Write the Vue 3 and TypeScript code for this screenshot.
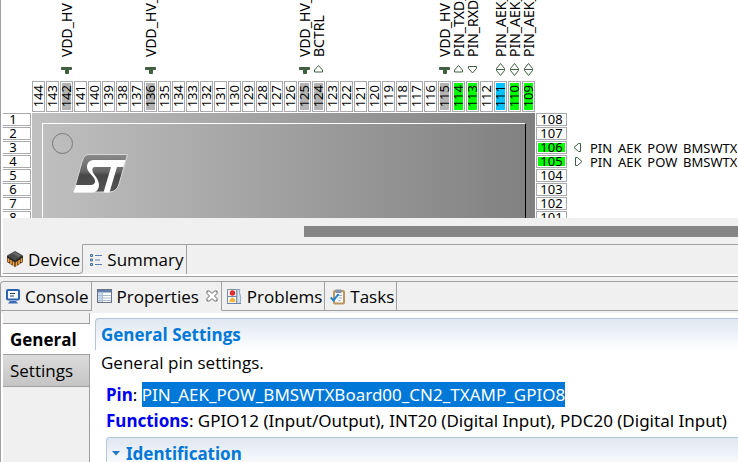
<script setup lang="ts">
import { ref } from 'vue'

type Glyph = 'supply' | 'up' | 'down' | 'both' | 'left' | 'right'
type Tone = 'plain' | 'grey' | 'green' | 'blue'

interface Pin {
  num: number
  label: string
  glyph: Glyph | ''
  tone: Tone
}

const named: Record<number, Omit<Pin, 'num'>> = {
  142: { label: 'VDD_HV', glyph: 'supply', tone: 'grey' },
  136: { label: 'VDD_HV_', glyph: 'supply', tone: 'grey' },
  125: { label: 'VDD_HV_', glyph: 'supply', tone: 'grey' },
  124: { label: 'BCTRL', glyph: 'up', tone: 'grey' },
  115: { label: 'VDD_HV', glyph: 'supply', tone: 'grey' },
  114: { label: 'PIN_TXD_', glyph: 'up', tone: 'green' },
  113: { label: 'PIN_RXD_', glyph: 'down', tone: 'green' },
  111: { label: 'PIN_AEK_', glyph: 'both', tone: 'blue' },
  110: { label: 'PIN_AEK_', glyph: 'both', tone: 'green' },
  109: { label: 'PIN_AEK_', glyph: 'both', tone: 'green' },
  106: { label: 'PIN_AEK_POW_BMSWTX', glyph: 'left', tone: 'green' },
  105: { label: 'PIN_AEK_POW_BMSWTX', glyph: 'right', tone: 'green' },
}

const glyphPaths: Record<Glyph, string> = {
  supply: 'M.5 4.5h10v2h-3v4h-3v-4h-4z',
  up: 'M5.5 2.5l4 4.500v2h-8v-2z',
  down: 'M1.500 3.500h8v2l-4 4.500-4-4.500z',
  both: 'M5.500 0.500l4 5v2l-4 5-4-5v-2zM1.500 6.500h8',
  left: 'M7.500 2.500v8h-2l-4.500-4 4.500-4z',
  right: 'M2.500 2.500v8h2l4.500-4-4.500-4z',
}

function pin(num: number): Pin {
  return { num, ...(named[num] ?? { label: '', glyph: '', tone: 'plain' }) }
}

const topPins: Pin[] = Array.from({ length: 36 }, (_, i) => pin(144 - i))
const rightPins: Pin[] = Array.from({ length: 8 }, (_, i) => pin(108 - i))
const leftPins: Pin[] = Array.from({ length: 8 }, (_, i) => pin(i + 1))

const page = ref<'General' | 'Settings'>('General')
</script>

<template>
  <div class="workbench">
    <section class="editor">
      <div class="canvas">
        <div class="top-pins">
          <div v-for="p in topPins" :key="p.num" class="column">
            <span class="v-label">{{ p.label }}</span>
            <span class="v-glyph">
              <svg v-if="p.glyph" width="11" height="13" viewBox="0 0 11 13" :class="['glyph', { solid: p.glyph === 'supply' }]">
                <path :d="glyphPaths[p.glyph]" />
              </svg>
            </span>
            <span class="v-pin"><span :class="['pad', p.tone]"><span class="v-num">{{ p.num }}</span></span></span>
          </div>
        </div>
        <div class="body-row">
          <div class="side left">
            <div v-for="p in leftPins" :key="p.num" class="h-pin"><span class="pad plain">{{ p.num }}</span></div>
          </div>
          <div class="chip">
            <div class="die">
              <svg width="90" height="80" viewBox="0 0 90 80" role="img" aria-label="ST">
                <defs>
                  <linearGradient id="badge" x1="0" y1="0" x2="0" y2="1">
                    <stop offset="0" stop-color="#8a8a8a" />
                    <stop offset="0.450" stop-color="#666" />
                    <stop offset="0.550" stop-color="#484848" />
                    <stop offset="1" stop-color="#555" />
                  </linearGradient>
                </defs>
                <circle cx="19.500" cy="19.500" r="10" fill="none" stroke="#777" />
                <path d="M46 30.500H84.500L76 60q-2 7.500-9 8H30.500L39.500 36q2-5.500 6.500-5.500z" fill="url(#badge)" stroke="#d8d8d8" />
                <path d="M82.500 36H51c-7 0-9 7-5 12l5 6c2 3 1 7-3 7H33l-2.500 7.500H50c5-.5 7-6 5.500-10.500C54 53 50 50 49.500 47c-.5-2.500.5-4 2.500-4H68l-7.500 25.500h6L74 43h6.500z" fill="#fff" />
              </svg>
            </div>
          </div>
          <div class="side right">
            <div v-for="p in rightPins" :key="p.num" class="right-row">
              <div class="h-pin"><span :class="['pad', p.tone]">{{ p.num }}</span></div>
              <svg v-if="p.glyph" width="11" height="13" viewBox="0 0 11 13" class="glyph">
                <path :d="glyphPaths[p.glyph]" />
              </svg>
              <span class="h-label">{{ p.label }}</span>
            </div>
          </div>
        </div>
      </div>
      <div class="scrollbar"><div class="thumb"></div></div>
      <div class="bottom-tabs" role="tablist">
        <button class="tab current" role="tab" aria-selected="true">
          <svg width="18" height="18" viewBox="0 0 18 18">
            <path d="M1 6v6l8 5 8-5V6z" fill="#5a3a20" />
            <path d="M2.500 8v4M5 9.500v4.500M7.500 11v5M10.500 11v5M13 9.500v4.500M15.500 8v4" stroke="#eda548" stroke-width="1.600" />
            <path d="M9 1l8 4.500-8 5-8-5z" fill="#4b4b4b" />
            <path d="M1 5.500l8 5 8-5v2l-8 5-8-5z" fill="#2b2927" />
            <path d="M9 2l6 3.500-3 1.500-6-3.500z" fill="#666" />
          </svg>
          Device
        </button>
        <button class="tab" role="tab" aria-selected="false">
          <svg width="14" height="14" viewBox="0 0 14 14">
            <path d="M1.500 1.500h2v2h-2zM1.500 6h2v2h-2zM1.500 10.500h2v2h-2z" fill="#9fc0dc" stroke="#4a74a0" />
            <path d="M6 2.500h7M6 7h5M6 11.500h7" stroke="#5c7db8" />
          </svg>
          Summary
        </button>
        <span class="rest"></span>
      </div>
    </section>

    <section class="views">
      <div class="view-tabs" role="tablist">
        <button class="tab" role="tab" aria-selected="false">
          <svg width="14" height="16" viewBox="0 0 14 16">
            <rect x="1" y="2" width="12" height="9.500" rx="1" fill="#f4f8ff" stroke="#2d62ad" stroke-width="2" />
            <path d="M4 5.500h5M4 8h4" stroke="#2f3f60" />
            <path d="M4 13h6l2 2.500H2z" fill="#3b6db4" />
          </svg>
          Console
        </button>
        <button class="tab current" role="tab" aria-selected="true">
          <svg width="15" height="15" viewBox="0 0 15 15">
            <rect x=".5" y=".5" width="14" height="13" fill="#fff" stroke="#6b7284" />
            <path d="M1 1h13v2.500H1z" fill="#5f7fae" />
            <path d="M1 4h4v9H1z" fill="#cfdff0" />
            <path d="M5.500 4v9M1 6.500h13M1 9h13M1 11.500h13" stroke="#a9bdd0" />
          </svg>
          Properties
          <svg class="close" width="12" height="12" viewBox="0 0 12 12">
            <path d="M1 1h2.500L6 3.500 8.500 1H11v2.500L8.500 6 11 8.500V11H8.500L6 8.500 3.500 11H1V8.500L3.500 6 1 3.500z" fill="#fff" stroke="#666" />
          </svg>
        </button>
        <button class="tab" role="tab" aria-selected="false">
          <svg width="15" height="17" viewBox="0 0 15 17">
            <path d="M.5 1.500h9v14h-9z" fill="#fdf4ea" stroke="#7c8eab" />
            <path d="M10 1.500h3q-1.500 2 0 5t0 9h-3z" fill="#d7e4f1" stroke="#8ea5bd" />
            <path d="M0 8.500h10M0 15.500h14" stroke="#6a83a6" />
            <circle cx="5.500" cy="5" r="2.700" fill="#e02a38" />
            <path d="M2.500 14q0-3.500 3-4.500 3 1 3 4.500z" fill="#f3b33d" />
          </svg>
          Problems
        </button>
        <button class="tab" role="tab" aria-selected="false">
          <svg width="15" height="17" viewBox="0 0 15 17">
            <rect x="4" y="3" width="10" height="12.500" rx="1" fill="#f4f8fd" stroke="#bd955e" stroke-width="2" />
            <path d="M5.500 1.500h6V5h-6z" fill="#8590ab" />
            <path d="M7.500 7.500h4.500M8.500 10h3.500M8.500 12.500h2" stroke="#96abc8" />
            <path d="M.8 9.500L3.500 12.500 8.500 6" fill="none" stroke="#1d83cf" stroke-width="2" />
          </svg>
          Tasks
        </button>
        <span class="rest"></span>
      </div>

      <div class="view-body">
        <nav class="pages">
          <button :class="['page', { on: page === 'General' }]" @click="page = 'General'">General</button>
          <button :class="['page', { on: page === 'Settings' }]" @click="page = 'Settings'">Settings</button>
        </nav>
        <div class="form">
          <h2 class="heading">General Settings</h2>
          <p class="description">General pin settings.</p>
          <div class="facts">
            <p><b>Pin</b>: <span class="selected">PIN_AEK_POW_BMSWTXBoard00_CN2_TXAMP_GPIO8</span></p>
            <p><b>Functions</b>: GPIO12 (Input/Output), INT20 (Digital Input), PDC20 (Digital Input)</p>
            <button class="heading expander" aria-expanded="true">
              <svg width="8" height="5" viewBox="0 0 8 5"><path d="M0 0h8L4 4.500z" fill="#2477c4" /></svg>
              Identification
            </button>
          </div>
        </div>
      </div>
    </section>
  </div>
</template>

<style>
html,
body {
  background: #f0f0f0;
  overflow: hidden;
}
</style>

<style scoped>
.workbench {
  display: flex;
  flex-direction: column;
  gap: 4px;
  height: 100vh;
  overflow: hidden;
  font-family: 'Open Sans', 'Noto Sans', sans-serif;
  font-size: 17px;
  color: #000;
}

button {
  font: inherit;
  color: inherit;
  margin: 0;
  padding: 0;
  border: 0;
  background: none;
  white-space: nowrap;
}

svg {
  display: block;
  flex: none;
}

p,
h2 {
  margin: 0;
}

.editor {
  flex: 0 0 277px;
  box-sizing: border-box;
  display: flex;
  flex-direction: column;
  min-width: 0;
  min-height: 0;
  padding: 0 0 2px 2px;
  border: solid #a0a0a0;
  border-width: 0 0 1px 1px;
  background: #fff;
}

.canvas {
  flex: 1;
  min-height: 0;
  overflow: hidden;
  font-family: 'Noto Sans', 'Open Sans', sans-serif;
  font-size: 13px;
}

.top-pins {
  display: flex;
  gap: 1px;
  padding-left: 29px;
}

.column {
  flex: none;
  width: 13px;
  display: grid;
  grid-template-rows: 57px 24px 31px;
  padding-bottom: 1px;
}

.v-label {
  writing-mode: vertical-rl;
  transform: rotate(180deg);
  font-size: 14px;
  line-height: 13px;
  white-space: nowrap;
}

.v-glyph {
  display: grid;
  place-items: center;
}

.glyph {
  fill: none;
  stroke: #3f5f40;
}

.glyph.solid {
  fill: #3f5f40;
}

.v-pin,
.h-pin {
  box-sizing: border-box;
  border: 1px solid #a9a9b0;
  padding: 1px;
  background: #fff;
  display: flex;
}

.pad {
  flex: 1;
  display: flex;
  align-items: center;
  justify-content: center;
  line-height: 9px;
}

.pad.grey {
  background: #b4b4b4;
}

.pad.green {
  background: #00ff00;
}

.pad.blue {
  background: #00c3ff;
}

.v-num {
  writing-mode: vertical-rl;
  transform: rotate(180deg);
  line-height: 9px;
}

.body-row {
  display: flex;
  gap: 1px;
}

.side {
  display: grid;
  grid-auto-rows: 13px;
  gap: 1px;
  flex: none;
}

.left .h-pin {
  width: 28px;
  border-left: 0;
}

.left .pad {
  padding-right: 7px;
}

.chip {
  flex: none;
  box-sizing: border-box;
  width: 503px;
  padding: 10px 9px 0 10px;
  background: linear-gradient(90deg, #c0c0c0, #808080);
}

.die {
  box-sizing: border-box;
  height: 100%;
  border: 1px solid #fff;
  border-right-color: #000;
  border-bottom: 0;
}

.right-row {
  display: flex;
  align-items: center;
}

.right .h-pin {
  width: 31px;
  height: 13px;
}

.right-row .glyph {
  margin: 0 6px;
}

.h-label {
  height: 13px;
  line-height: 14px;
  overflow: hidden;
  white-space: nowrap;
}

.scrollbar {
  flex: none;
  height: 26px;
  box-sizing: border-box;
  padding: 8px 0 7px 301px;
  background: #f0f0f0;
}

.thumb {
  height: 11px;
  background: #858585;
}

.bottom-tabs,
.view-tabs {
  flex: none;
  display: flex;
  height: 30px;
  background: #f0f0f0;
}

.tab {
  box-sizing: border-box;
  display: flex;
  align-items: center;
  gap: 5px;
  padding: 0 2px 0 5px;
}

.rest {
  flex: 1;
}

.bottom-tabs .tab,
.bottom-tabs .rest {
  border-top: 1px solid #a0a0a0;
}

.bottom-tabs .tab {
  gap: 4px;
  border-right: 1px solid #a0a0a0;
  padding-left: 6px;
}

.bottom-tabs .tab.current {
  padding-left: 3px;
  border-top-color: transparent;
  border-bottom: 1px solid #a0a0a0;
  border-bottom-right-radius: 4px;
}

.views {
  flex: 1;
  min-height: 0;
  display: flex;
  flex-direction: column;
  border: solid #a0a0a0;
  border-width: 1px 0 0 1px;
  border-top-left-radius: 4px;
}

.view-tabs {
  height: 29px;
  border-top-left-radius: 4px;
}

.view-tabs .tab,
.view-tabs .rest {
  border-bottom: 1px solid #a0a0a0;
}

.view-tabs .tab {
  border-right: 1px solid #a0a0a0;
}

.view-tabs .tab.current {
  border-bottom-color: transparent;
}

.close {
  margin: 0 1px 0 2px;
}

.view-body {
  flex: 1;
  min-height: 0;
  display: flex;
  border-top: 2px solid #f0f0f0;
  padding-left: 2px;
  background: #fff;
}

.pages {
  flex: none;
  box-sizing: border-box;
  width: 87px;
  padding-top: 10px;
  background: #f0f0f0;
  border-right: 1px solid #a0a0a0;
}

.page {
  box-sizing: border-box;
  display: block;
  width: 100%;
  height: 32px;
  padding-left: 7px;
  text-align: left;
  border-bottom: 1px solid #a0a0a0;
  background: linear-gradient(#dcdcdc, #c4c4c4);
}

.page.on {
  width: 87px;
  font-weight: 700;
  border-top: 1px solid #a0a0a0;
  background: #fff;
}

.form {
  flex: 1;
  min-width: 0;
  padding: 5px 0 0 5px;
  overflow: hidden;
}

.heading {
  box-sizing: border-box;
  height: 32px;
  padding-left: 5px;
  border: solid #b3c6db;
  border-width: 1px 0 0 1px;
  border-top-left-radius: 4px;
  background: linear-gradient(#dfe7f0, #fff);
  color: #0078d7;
  font-size: 17px;
  font-weight: 700;
  line-height: 32px;
}

.description {
  padding-left: 6px;
  line-height: 26px;
}

.facts {
  padding: 6px 0 0 11px;
  font-family: 'Noto Sans', 'Open Sans', sans-serif;
  white-space: nowrap;
}

.facts p {
  line-height: 25px;
  padding-bottom: 1px;
}

.facts b {
  color: #0000f0;
}

.selected {
  display: inline-block;
  background: #0078d7;
  color: #fff;
}

.expander {
  display: flex;
  align-items: center;
  gap: 6px;
  width: 100%;
  margin-top: 3px;
}
</style>
